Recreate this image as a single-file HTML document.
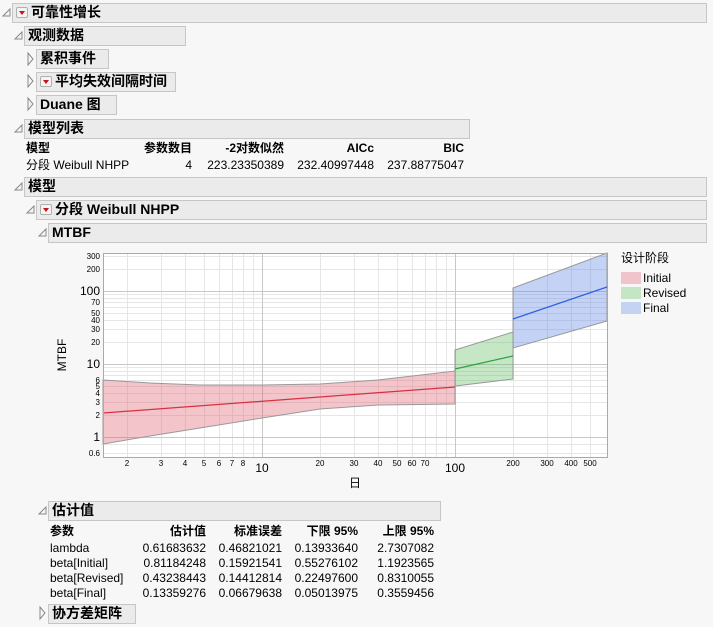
<!DOCTYPE html>
<html><head><meta charset="utf-8"><style>
body{margin:0;width:713px;height:627px;background:#f7f7f7;position:relative;overflow:hidden;font-family:"Liberation Sans","Noto Sans CJK SC",sans-serif;color:#000}
.h{position:absolute;background:#ebebeb;border:1px solid #c6c6c6;box-sizing:border-box;font-weight:bold;font-size:14px;line-height:17px;padding-left:3px;white-space:nowrap}
.t{position:absolute;font-size:12px;line-height:14px;white-space:nowrap}
.r{text-align:right}
.b{font-weight:bold}
.tri{position:absolute;width:0;height:0}
.dn{display:inline-block;width:12px;height:11px;border:1px solid #b0b0b0;background:#f4f4f4;border-radius:2px;vertical-align:-1px;margin-right:3px;position:relative;box-sizing:border-box}
.dn:after{content:"";position:absolute;left:2px;top:3px;border-left:3px solid transparent;border-right:3px solid transparent;border-top:4px solid #d01010}
</style></head><body>
<svg width="713" height="627" style="position:absolute;left:0;top:0">
<g fill="none" stroke="#888" stroke-width="1">
<path d="M3 16 L10 9 L10 16Z"/><path d="M15 39 L22 32 L22 39Z"/><path d="M15 132 L22 125 L22 132Z"/><path d="M15 190 L22 183 L22 190Z"/><path d="M27 213 L34 206 L34 213Z"/><path d="M39 236 L46 229 L46 236Z"/><path d="M39 514 L46 507 L46 514Z"/>
<path d="M28 53 L33 59 L28 65Z"/><path d="M28 75 L33 81 L28 87Z"/><path d="M28 98 L33 104 L28 110Z"/><path d="M40 607 L45 613 L40 619Z"/>
</g>
<rect x="103" y="253" width="504" height="204" fill="#fff"/>
<g stroke="#e6e6e6" stroke-width="1">
<path d="M127.5 253V457M161.5 253V457M185.5 253V457M204.5 253V457M219.5 253V457M232.5 253V457M243.5 253V457M253.5 253V457M320.5 253V457M354.5 253V457M378.5 253V457M397.5 253V457M412.5 253V457M425.5 253V457M436.5 253V457M446.5 253V457M513.5 253V457M547.5 253V457M571.5 253V457M590.5 253V457"/>
<path d="M103 453.5H607M103 444.5H607M103 415.5H607M103 402.5H607M103 393.5H607M103 386.5H607M103 380.5H607M103 375.5H607M103 371.5H607M103 367.5H607M103 342.5H607M103 329.5H607M103 320.5H607M103 313.5H607M103 307.5H607M103 302.5H607M103 298.5H607M103 294.5H607M103 269.5H607M103 256.5H607"/>
</g>
<g stroke="#c8c8c8"><path d="M262.5 253V457M455.5 253V457M103 437.5H607M103 364.5H607M103 291.5H607"/></g>
<path d="M103 380 L150 383 L200 385 L262 385 L320 384 L378 380 L455 371 L455 404 L378 405 L320 409 L262 418 L200 428 L150 436 L103 444Z" fill="rgba(220,90,105,0.35)" stroke="#999"/>
<path d="M455 350 L513 332 L513 379 L455 386Z" fill="rgba(90,185,90,0.35)" stroke="#999"/>
<path d="M513 288 L607 253 L607 321 L513 348Z" fill="rgba(100,140,230,0.38)" stroke="#999"/>
<path d="M103 413 L455 387" stroke="#d83040" stroke-width="1.2" fill="none"/>
<path d="M455 369 L513 356" stroke="#30a040" stroke-width="1.2" fill="none"/>
<path d="M513 319 L607 287" stroke="#3060e0" stroke-width="1.2" fill="none"/>
<rect x="103.5" y="253.5" width="504" height="204" fill="none" stroke="#aaa"/>
<g font-family="Liberation Sans,sans-serif" font-size="8" text-anchor="end" fill="#000">
<text x="100" y="259">300</text><text x="100" y="272">200</text><text x="100" y="316">50</text><text x="100" y="323">40</text><text x="100" y="305">70</text><text x="100" y="332">30</text><text x="100" y="345">20</text><text x="100" y="383">6</text><text x="100" y="389">5</text><text x="100" y="396">4</text><text x="100" y="405">3</text><text x="100" y="418">2</text><text x="100" y="456">0.6</text>
<text x="100" y="295" font-size="12">100</text><text x="100" y="368" font-size="12">10</text><text x="100" y="441" font-size="12">1</text>
</g>
<g font-family="Liberation Sans,sans-serif" font-size="8" text-anchor="middle">
<text x="127" y="466">2</text><text x="161" y="466">3</text><text x="185" y="466">4</text><text x="204" y="466">5</text><text x="219" y="466">6</text><text x="232" y="466">7</text><text x="243" y="466">8</text><text x="320" y="466">20</text><text x="354" y="466">30</text><text x="378" y="466">40</text><text x="397" y="466">50</text><text x="412" y="466">60</text><text x="425" y="466">70</text><text x="513" y="466">200</text><text x="547" y="466">300</text><text x="571" y="466">400</text><text x="590" y="466">500</text>
<text x="262" y="472" font-size="12">10</text><text x="455" y="472" font-size="12">100</text>
</g>
<text x="355" y="487" font-size="12" text-anchor="middle" font-family="Noto Sans CJK SC,sans-serif">日</text>
<text x="66" y="355" font-size="12" text-anchor="middle" font-family="Liberation Sans,sans-serif" transform="rotate(-90 66 355)">MTBF</text>
<rect x="621" y="272" width="20" height="12" fill="#efc5cb"/><rect x="621" y="287" width="20" height="12" fill="#c5e6c5"/><rect x="621" y="302" width="20" height="12" fill="#c5d3f3"/>
</svg>
<div class="t" style="left:621px;top:251px">设计阶段</div>
<div class="t" style="left:643px;top:271px">Initial</div>
<div class="t" style="left:643px;top:286px">Revised</div>
<div class="t" style="left:643px;top:301px">Final</div>

<div class="h" style="left:12px;top:3px;width:695px;height:20px"><span class="dn"></span>可靠性增长</div>
<div class="h" style="left:24px;top:26px;width:162px;height:20px">观测数据</div>
<div class="h" style="left:36px;top:49px;width:73px;height:20px">累积事件</div>
<div class="h" style="left:36px;top:72px;width:140px;height:20px"><span class="dn"></span>平均失效间隔时间</div>
<div class="h" style="left:36px;top:95px;width:81px;height:20px">Duane 图</div>
<div class="h" style="left:24px;top:119px;width:446px;height:20px">模型列表</div>
<div class="t b" style="left:26px;top:141px">模型</div>
<div class="t b r" style="left:120px;top:141px;width:72px">参数数目</div>
<div class="t b r" style="left:200px;top:141px;width:84px">-2对数似然</div>
<div class="t b r" style="left:290px;top:141px;width:84px">AICc</div>
<div class="t b r" style="left:380px;top:141px;width:84px">BIC</div>
<div class="t" style="left:26px;top:158px">分段 Weibull NHPP</div>
<div class="t r" style="left:120px;top:158px;width:72px">4</div>
<div class="t r" style="left:200px;top:158px;width:84px">223.23350389</div>
<div class="t r" style="left:290px;top:158px;width:84px">232.40997448</div>
<div class="t r" style="left:380px;top:158px;width:84px">237.88775047</div>
<div class="h" style="left:24px;top:177px;width:683px;height:20px">模型</div>
<div class="h" style="left:36px;top:200px;width:671px;height:20px"><span class="dn"></span>分段 Weibull NHPP</div>
<div class="h" style="left:48px;top:223px;width:659px;height:20px">MTBF</div>

<div class="h" style="left:48px;top:501px;width:393px;height:20px">估计值</div>
<div class="t b" style="left:50px;top:524px">参数</div>
<div class="t b r" style="left:130px;top:524px;width:76px">估计值</div>
<div class="t b r" style="left:206px;top:524px;width:76px">标准误差</div>
<div class="t b r" style="left:282px;top:524px;width:76px">下限 95%</div>
<div class="t b r" style="left:358px;top:524px;width:76px">上限 95%</div>
<div class="t" style="left:50px;top:541px">lambda</div><div class="t r" style="left:130px;top:541px;width:76px">0.61683632</div><div class="t r" style="left:206px;top:541px;width:76px">0.46821021</div><div class="t r" style="left:282px;top:541px;width:76px">0.13933640</div><div class="t r" style="left:358px;top:541px;width:76px">2.7307082</div>
<div class="t" style="left:50px;top:556px">beta[Initial]</div><div class="t r" style="left:130px;top:556px;width:76px">0.81184248</div><div class="t r" style="left:206px;top:556px;width:76px">0.15921541</div><div class="t r" style="left:282px;top:556px;width:76px">0.55276102</div><div class="t r" style="left:358px;top:556px;width:76px">1.1923565</div>
<div class="t" style="left:50px;top:571px">beta[Revised]</div><div class="t r" style="left:130px;top:571px;width:76px">0.43238443</div><div class="t r" style="left:206px;top:571px;width:76px">0.14412814</div><div class="t r" style="left:282px;top:571px;width:76px">0.22497600</div><div class="t r" style="left:358px;top:571px;width:76px">0.8310055</div>
<div class="t" style="left:50px;top:586px">beta[Final]</div><div class="t r" style="left:130px;top:586px;width:76px">0.13359276</div><div class="t r" style="left:206px;top:586px;width:76px">0.06679638</div><div class="t r" style="left:282px;top:586px;width:76px">0.05013975</div><div class="t r" style="left:358px;top:586px;width:76px">0.3559456</div>
<div class="h" style="left:48px;top:604px;width:88px;height:20px">协方差矩阵</div>
</body></html>
